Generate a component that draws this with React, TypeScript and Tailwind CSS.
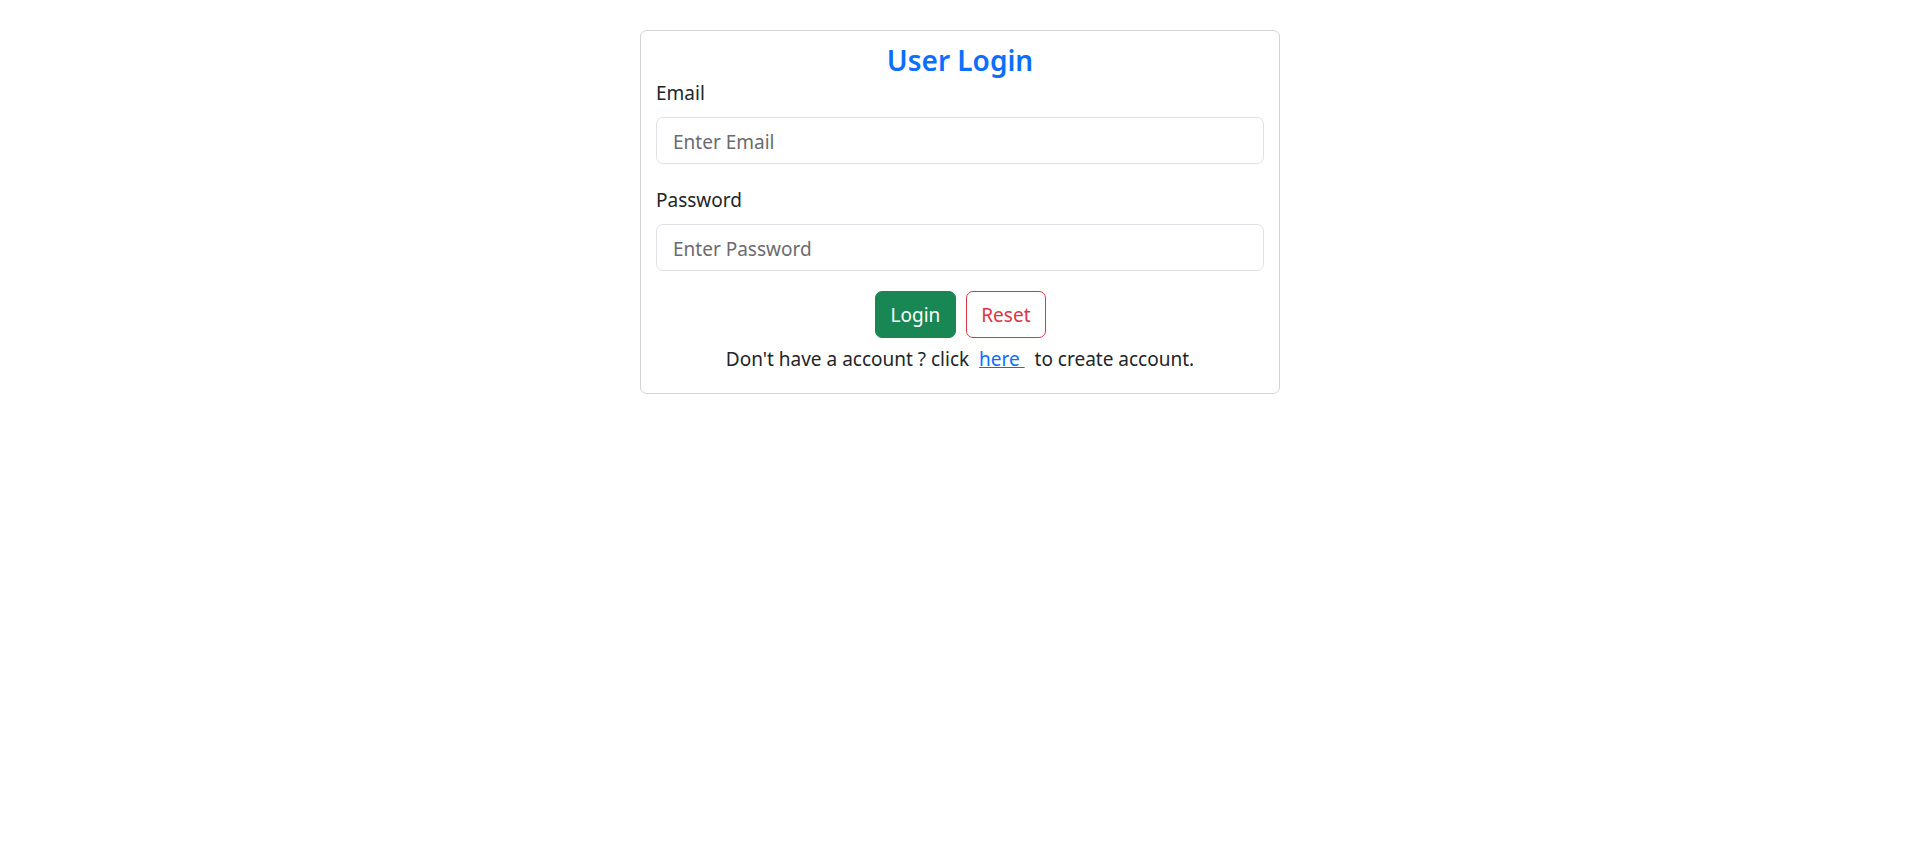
import React, { useState } from 'react';

export default function App() {
  const [email, setEmail] = useState('');
  const [password, setPassword] = useState('');

  const handleReset = () => {
    setEmail('');
    setPassword('');
  };

  return (
    <div className="min-h-screen bg-white font-['Noto_Sans',sans-serif] text-[#212529]">
      <div className="pt-[30px]">
        <div className="mx-auto w-[640px] rounded-[7px] border border-[#d3d3d3] px-[15px] pt-[11px] pb-[19px]">
          <h4 className="text-center text-[28px] leading-[36px] font-semibold text-[#0d6efd]">User Login</h4>

          <form onSubmit={(e) => e.preventDefault()}>
            {/* Email */}
            <div className="mb-[20px]">
              <label className="mb-[9px] block text-[19px] leading-[30px]">Email</label>
              <input
                type="email"
                placeholder="Enter Email"
                value={email}
                onChange={(e) => setEmail(e.target.value)}
                className="block h-[47px] w-full rounded-[7px] border border-[#dee2e6] px-[16px] pt-[2px] text-[19px] placeholder:text-[#6c6a70] focus:outline-none"
              />
            </div>

            {/* Password */}
            <div className="mb-[20px]">
              <label className="mb-[9px] block pt-[1px] text-[19px] leading-[30px]">Password</label>
              <input
                type="password"
                placeholder="Enter Password"
                value={password}
                onChange={(e) => setPassword(e.target.value)}
                className="block h-[47px] w-full rounded-[7px] border border-[#dee2e6] px-[16px] pt-[2px] text-[19px] placeholder:text-[#6c6a70] focus:outline-none"
              />
            </div>

            <div className="flex justify-center gap-[10px]">
              <button
                type="submit"
                className="h-[47px] rounded-[7px] border border-[#198754] bg-[#198754] px-[15px] pt-[1px] text-[19px] text-white"
              >
                Login
              </button>
              <button
                type="button"
                onClick={handleReset}
                className="h-[47px] rounded-[7px] border border-[#dc3545] bg-white px-[14px] pt-[1px] text-[19px] text-[#dc3545]"
              >
                Reset
              </button>
            </div>
          </form>

          <p className="mt-[6px] text-center text-[19px] leading-[30px]">
            Don't have a account ? click&nbsp;{' '}
            <a href="#" className="text-[#0d6efd] underline">here&nbsp;</a>
            {' '}&nbsp;to create account.
          </p>
        </div>
      </div>
    </div>
  );
}
